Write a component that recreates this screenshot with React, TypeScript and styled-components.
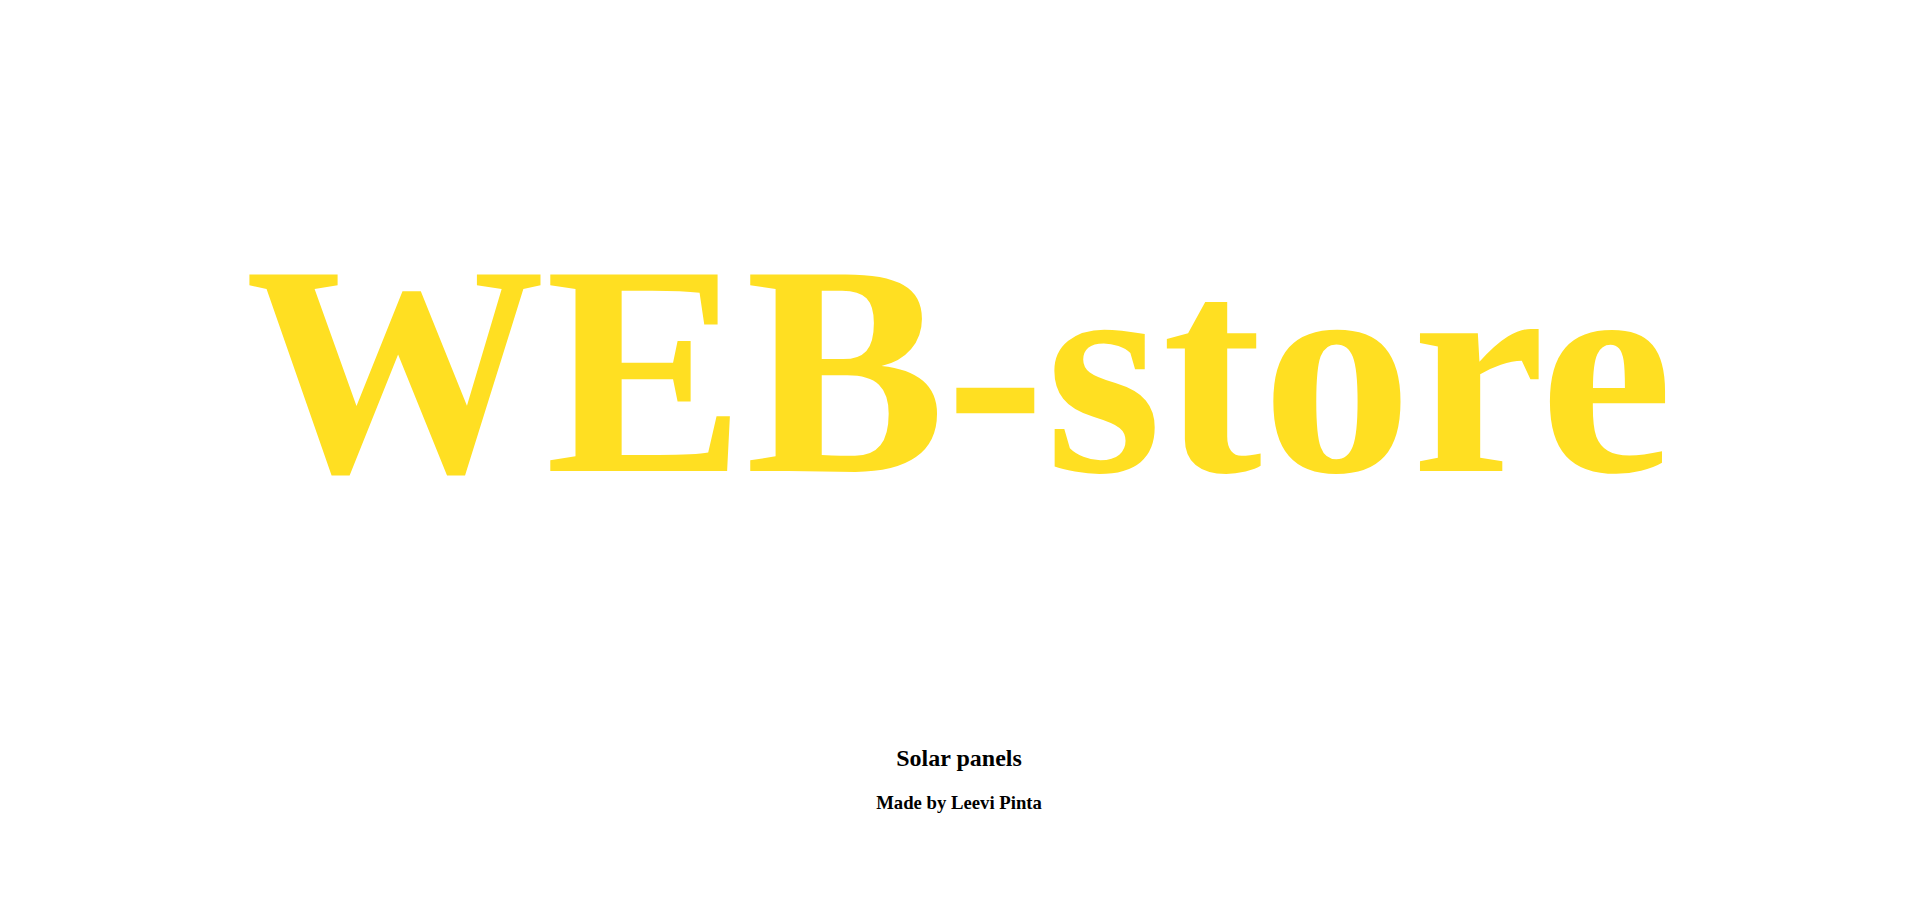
import React from "react";
import styled, { createGlobalStyle } from "styled-components";

const GlobalStyle = createGlobalStyle`
  html, body {
    margin: 0;
    padding: 0;
    background: #ffffff;
  }
  body {
    font-family: "Liberation Serif", "Times New Roman", serif;
  }
`;

const Page = styled.main`
  display: flex;
  flex-direction: column;
  align-items: center;
  padding-top: 204px;
  text-align: center;
`;

const Title = styled.h1`
  margin: 0;
  font-family: "Liberation Serif", "Times New Roman", serif;
  font-weight: 700;
  font-size: 300px;
  line-height: 332px;
  color: rgb(255, 223, 34);
  white-space: nowrap;
`;

const Subtitle = styled.h2`
  margin: 209px 0 0;
  font-size: 24px;
  line-height: 27px;
  font-weight: 700;
  color: #000;
`;

const Credit = styled.h3`
  margin: 20px 0 0;
  font-size: 18.72px;
  line-height: 21px;
  font-weight: 700;
  color: #000;
`;

export default function App() {
  return (
    <>
      <GlobalStyle />
      <Page>
        <Title>WEB-store</Title>
        <Subtitle>Solar panels</Subtitle>
        <Credit>Made by Leevi Pinta</Credit>
      </Page>
    </>
  );
}
